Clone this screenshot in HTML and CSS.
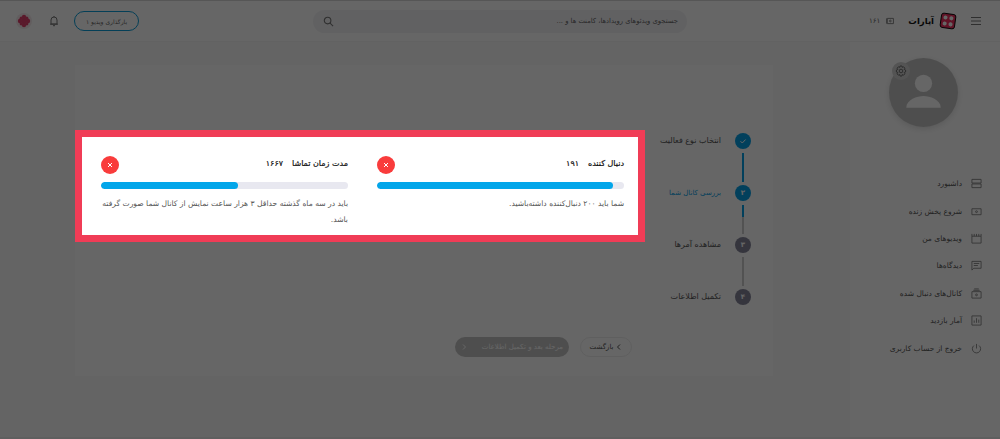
FILE: index.html
```html
<!DOCTYPE html>
<html lang="fa" dir="rtl">
<head>
<meta charset="utf-8">
<title>آپارات</title>
<link rel="stylesheet" href="styles.css">
</head>
<body>
<div class="app">
  <header class="topbar">
    <svg class="menu-icon" viewBox="0 0 12 10"><path d="M1 1.5h10M1 5h10M1 8.5h10"/></svg>
    <div class="brand">
      <svg class="brand-mark" viewBox="0 0 20 20">
        <g transform="rotate(8 10 10)">
          <rect x="2" y="2" width="16" height="16" rx="2.500" fill="#f03060" stroke="#000" stroke-width="1"/>
          <circle cx="6.700" cy="6.500" r="2.300" fill="#fff"/>
          <circle cx="13.300" cy="6.500" r="2.300" fill="#fff"/>
          <circle cx="6.700" cy="13.300" r="2.300" fill="#fff"/>
          <circle cx="13.300" cy="13.300" r="2.300" fill="#fff"/>
        </g>
      </svg>
      <span class="brand-name">آپارات</span>
    </div>
    <div class="credit">
      <svg class="credit-icon" viewBox="0 0 10 8"><path d="M1.500 1h7v6h-7zM.4 1v6"/><circle cx="5" cy="4" r="1"/></svg>
      <span>۱۶۱</span>
    </div>
    <div class="search">
      <span class="search-text">جستجوی ویدئوهای رویدادها، کامنت ها و ...</span>
      <svg class="search-icon" viewBox="0 0 12 12"><circle cx="5" cy="5" r="3.600"/><path d="M7.700 7.700l3.300 3.300"/></svg>
    </div>
    <button class="upload">بارگذاری ویدیو ۱</button>
    <svg class="bell" viewBox="0 0 12 12"><path d="M3 9V5a3 3 0 0 1 6 0v4zM2 9.200h8M5 10.700h2M6 1v1"/></svg>
    <svg class="user-logo" viewBox="0 0 16 16">
      <circle cx="8" cy="8" r="8" fill="#f4e9ec"/>
      <g fill="#e0406c"><circle cx="8" cy="4" r="2.200"/><circle cx="8" cy="12" r="2.200"/><circle cx="4" cy="8" r="2.200"/><circle cx="12" cy="8" r="2.200"/><circle cx="8" cy="8" r="3"/><circle cx="5.200" cy="5.200" r="1.600"/><circle cx="10.800" cy="5.200" r="1.600"/><circle cx="5.200" cy="10.800" r="1.600"/><circle cx="10.800" cy="10.800" r="1.600"/></g>
    </svg>
  </header>

  <div class="layout">
    <aside class="sidebar">
      <div class="avatar">
        <svg class="avatar-person" viewBox="0 0 68 68"><circle cx="34" cy="25" r="8.500"/><path d="M17 49c0-8 11-11.500 17-11.500S51 41 51 49z"/></svg>
        <span class="avatar-gear">
          <svg viewBox="0 0 12 12"><circle cx="6" cy="6" r="1.800"/><path d="M5 1h2l.3 1.400 1.300-.6 1.300 1.400-.7 1.200 1.400.6v2l-1.400.5.700 1.300-1.300 1.400-1.300-.7L7 11H5l-.3-1.500-1.300.7-1.300-1.400.7-1.300L1.400 7V5l1.400-.6-.7-1.200 1.300-1.400 1.300.6z"/></svg>
        </span>
      </div>
      <nav class="nav">
        <a class="nav-item"><svg viewBox="0 0 12 12"><path d="M1 1.500h10v4H1zM1 6.500h10v4H1z"/></svg><span>داشبورد</span></a>
        <a class="nav-item"><svg viewBox="0 0 12 12"><path d="M1 3h10v6.500H1z"/><circle cx="6" cy="6.200" r="1"/></svg><span>شروع پخش زنده</span></a>
        <a class="nav-item"><svg viewBox="0 0 12 12"><path d="M1 3.500h10V11H1zM1 1v2.500M3.500 1v2.500M6 1v2.500M8.500 1v2.500M11 1v2.500"/></svg><span>ویدیوهای من</span></a>
        <a class="nav-item"><svg viewBox="0 0 12 12"><path d="M1 1.500h10v7.500H3l-2 2zM3 3.800h6M3 6h4.500"/></svg><span>دیدگاه‌ها</span></a>
        <a class="nav-item"><svg viewBox="0 0 12 12"><path d="M1 4h10v7H1zM2.500 2.500h7M3.500 1h5"/><circle cx="6" cy="7.500" r="1"/></svg><span>کانال‌های دنبال شده</span></a>
        <a class="nav-item"><svg viewBox="0 0 12 12"><path d="M1 1h10v10H1zM3.500 8.500V6M6 8.500v-5M8.500 8.500V5"/></svg><span>آمار بازدید</span></a>
        <a class="nav-item"><svg viewBox="0 0 12 12"><path d="M6 1v5M3.200 2.800a4.500 4.500 0 1 0 5.600 0"/></svg><span>خروج از حساب کاربری</span></a>
      </nav>
    </aside>

    <main class="main">
      <section class="card">
        <ol class="steps">
          <li class="step done"><span class="dot"><svg viewBox="0 0 10 10"><path d="M2.500 5.200l1.800 1.800 3.300-3.500"/></svg></span><span class="step-label">انتخاب نوع فعالیت</span></li>
          <li class="step current"><span class="dot">۲</span><span class="step-label">بررسی کانال شما</span></li>
          <li class="step"><span class="dot">۳</span><span class="step-label">مشاهده آمرها</span></li>
          <li class="step last"><span class="dot">۴</span><span class="step-label">تکمیل اطلاعات</span></li>
        </ol>
        <div class="card-body">
          <div class="actions">
            <button class="btn-back"><svg class="chev" viewBox="0 0 6 8"><path d="M4 1.500L1.500 4 4 6.500"/></svg><span>بازگشت</span></button>
            <button class="btn-next"><span>مرحله بعد و تکمیل اطلاعات</span><svg class="chev" viewBox="0 0 6 8"><path d="M2 1.500L4.500 4 2 6.500"/></svg></button>
          </div>
        </div>
      </section>
    </main>
  </div>
</div>

<div class="dim"></div>

<section class="highlight">
  <article class="req">
    <div class="req-head">
      <div class="req-title"><span>دنبال کننده</span><span>۱۹۱</span></div>
      <span class="req-x"><svg viewBox="0 0 18 18"><path d="M7 7l4 4M11 7l-4 4"/></svg></span>
    </div>
    <div class="bar"><div class="bar-fill" style="width:95.5%"></div></div>
    <p class="req-text">شما باید ۲۰۰ دنبال‌کننده داشته‌باشید.</p>
  </article>
  <article class="req">
    <div class="req-head">
      <div class="req-title"><span>مدت زمان تماشا</span><span>۱۶۶۷</span></div>
      <span class="req-x"><svg viewBox="0 0 18 18"><path d="M7 7l4 4M11 7l-4 4"/></svg></span>
    </div>
    <div class="bar"><div class="bar-fill" style="width:55.6%"></div></div>
    <p class="req-text">باید در سه ماه گذشته حداقل ۳ هزار ساعت نمایش از کانال شما صورت گرفته باشد.</p>
  </article>
</section>
</body>
</html>
```
FILE: styles.css
```css
* { box-sizing: border-box; }
html, body { margin: 0; height: 100%; }
body {
  width: 1000px;
  height: 439px;
  overflow: hidden;
  background: #fbfbfb;
  font-family: "DejaVu Sans", "Noto Sans", sans-serif;
  color: #555;
  position: relative;
}
svg { display: block; fill: none; stroke: currentColor; }

.app { height: 439px; display: flex; flex-direction: column; border-top: 1px solid #d8d8d8; border-bottom: 2px solid #eee; }

.topbar {
  height: 41px;
  flex: none;
  display: flex;
  align-items: center;
  background: #fff;
  padding: 0 18px 0 0;
  border-bottom: 1px solid #f6f6f6;
}
.topbar > * { flex: none; }
.menu-icon { width: 12px; height: 10px; stroke: #777; stroke-width: 1; }
.brand { display: flex; align-items: center; gap: 5px; margin-right: 13px; }
.brand-mark, .user-logo { stroke: none; }
.brand-mark { width: 18px; height: 18px; }
.brand-name { font-size: 8.500px; font-weight: 700; color: #111; width: 23px; white-space: nowrap; }
.credit { width: 26px; display: flex; align-items: center; gap: 6px; margin-right: 16px; font-size: 7px; color: #666; }
.credit-icon { width: 10px; height: 8px; stroke: #777; stroke-width: 1; }
.search {
  width: 374px;
  height: 23px;
  margin-right: 182px;
  padding: 0 9px 0 10px;
  display: flex;
  align-items: center;
  justify-content: space-between;
  border-radius: 12px;
  background: #f3f3f6;
}
.search-text { font-size: 6.800px; color: #666; white-space: nowrap; }
.search-icon { width: 11px; height: 11px; stroke: #777; stroke-width: 1.200; }
.upload {
  width: 65px;
  height: 20px;
  margin-right: 174px;
  padding: 0;
  border: 1px solid #0b9ed9;
  border-radius: 10px;
  background: #fff;
  color: #666;
  font: 6px "DejaVu Sans", sans-serif;
  white-space: nowrap;
}
.bell { width: 12px; height: 12px; margin-right: 14px; stroke: #777; stroke-width: 1; }
.user-logo { width: 16px; height: 16px; margin-right: 16px; }

.layout { flex: 1; display: flex; min-height: 0; }
.sidebar { width: 150px; flex: none; background: #fff; padding-top: 16px; display: flex; flex-direction: column; }
.avatar {
  position: relative;
  width: 69px;
  height: 69px;
  margin-right: 42px;
  border-radius: 50%;
  background: #c4c4c4;
  box-shadow: 0 2px 6px rgba(0,0,0,.12);
}
.avatar-person { width: 69px; height: 69px; fill: #fff; stroke: none; }
.avatar-gear {
  position: absolute;
  top: 4px;
  left: 3px;
  width: 18px;
  height: 18px;
  padding: 3px;
  border-radius: 50%;
  background: #d2d2d2;
  color: #666;
}
.avatar-gear svg { width: 12px; height: 12px; stroke-width: .9; }
.nav { margin-top: 43px; display: flex; flex-direction: column; }
.nav-item { height: 27.400px; display: flex; align-items: center; gap: 9px; padding-right: 18px; font-size: 7.500px; color: #555; white-space: nowrap; }
.nav-item svg { width: 11px; height: 11px; stroke: #7a7a7a; stroke-width: .9; flex: none; }

.main { flex: 1; padding: 23px 77px 0 75px; }
.card { height: 311px; display: flex; background: #fff; }
.steps { width: 123px; flex: none; list-style: none; margin: 0; padding: 68px 22px 0 0; background: #fefefe; }
.step { height: 52px; display: flex; gap: 14px; position: relative; font-size: 8px; color: #555; white-space: nowrap; }
.step::after { content: ""; position: absolute; right: 7px; top: 20px; width: 2px; height: 29px; background: #ccc; }
.step.last::after { display: none; }
.step.done::after { background: #06a0e6; }
.step.current::after { background: linear-gradient(#06a0e6 42%, #ccc 42%); }
.dot { width: 16px; height: 16px; border-radius: 50%; background: #85859a; color: #fff; display: flex; align-items: center; justify-content: center; font-size: 7px; font-weight: 700; flex: none; }
.dot svg { width: 10px; height: 10px; stroke: #fff; stroke-width: 1; }
.done .dot, .current .dot { background: #06a0e6; }
.step-label { line-height: 16px; }
.current .step-label { font-size: 7px; color: #06a0e6; }
.card-body { flex: 1; display: flex; flex-direction: column; justify-content: flex-end; padding: 0 18px 19px 0; }
.actions { display: flex; gap: 11px; }
.btn-back, .btn-next { height: 20px; border-radius: 10px; padding: 0 8px; display: flex; align-items: center; justify-content: center; gap: 3px; font: 7px "DejaVu Sans", sans-serif; white-space: nowrap; }
.btn-back { width: 52px; background: #fff; border: 1px solid #eee; color: #555; }
.btn-next { width: 114px; padding: 0 6px; background: #c4c4c4; border: 0; color: #fff; justify-content: space-between; }
.chev { width: 6px; height: 8px; flex: none; stroke-width: 1; }

.dim { position: absolute; inset: 0; background: rgba(0,0,0,.6); }

.highlight {
  position: absolute;
  left: 75px;
  top: 130px;
  width: 570px;
  height: 112px;
  padding: 0 14px 0 19px;
  display: flex;
  gap: 29px;
  background: #fff;
  border: 7px solid #f03c56;
}
.req { width: 247px; flex: none; padding-top: 19px; }
.req-head { height: 18px; display: flex; align-items: center; justify-content: space-between; }
.req-title { display: flex; gap: 9px; padding-bottom: 4px; font-size: 8px; color: #111; white-space: nowrap; -webkit-text-stroke: .2px #111; }
.req-x { width: 18px; height: 18px; border-radius: 50%; background: #f93c3c; display: block; }
.req-x svg { width: 18px; height: 18px; stroke: #fff; stroke-width: 1; }
.bar { direction: ltr; height: 7px; margin-top: 8px; border-radius: 4px; background: #e8e8f0; overflow: hidden; }
.bar-fill { height: 7px; border-radius: 4px; background: #03a6ea; }
.req-text { margin: 7px 0 0; font-size: 7.600px; line-height: 16px; color: #555; }
```
